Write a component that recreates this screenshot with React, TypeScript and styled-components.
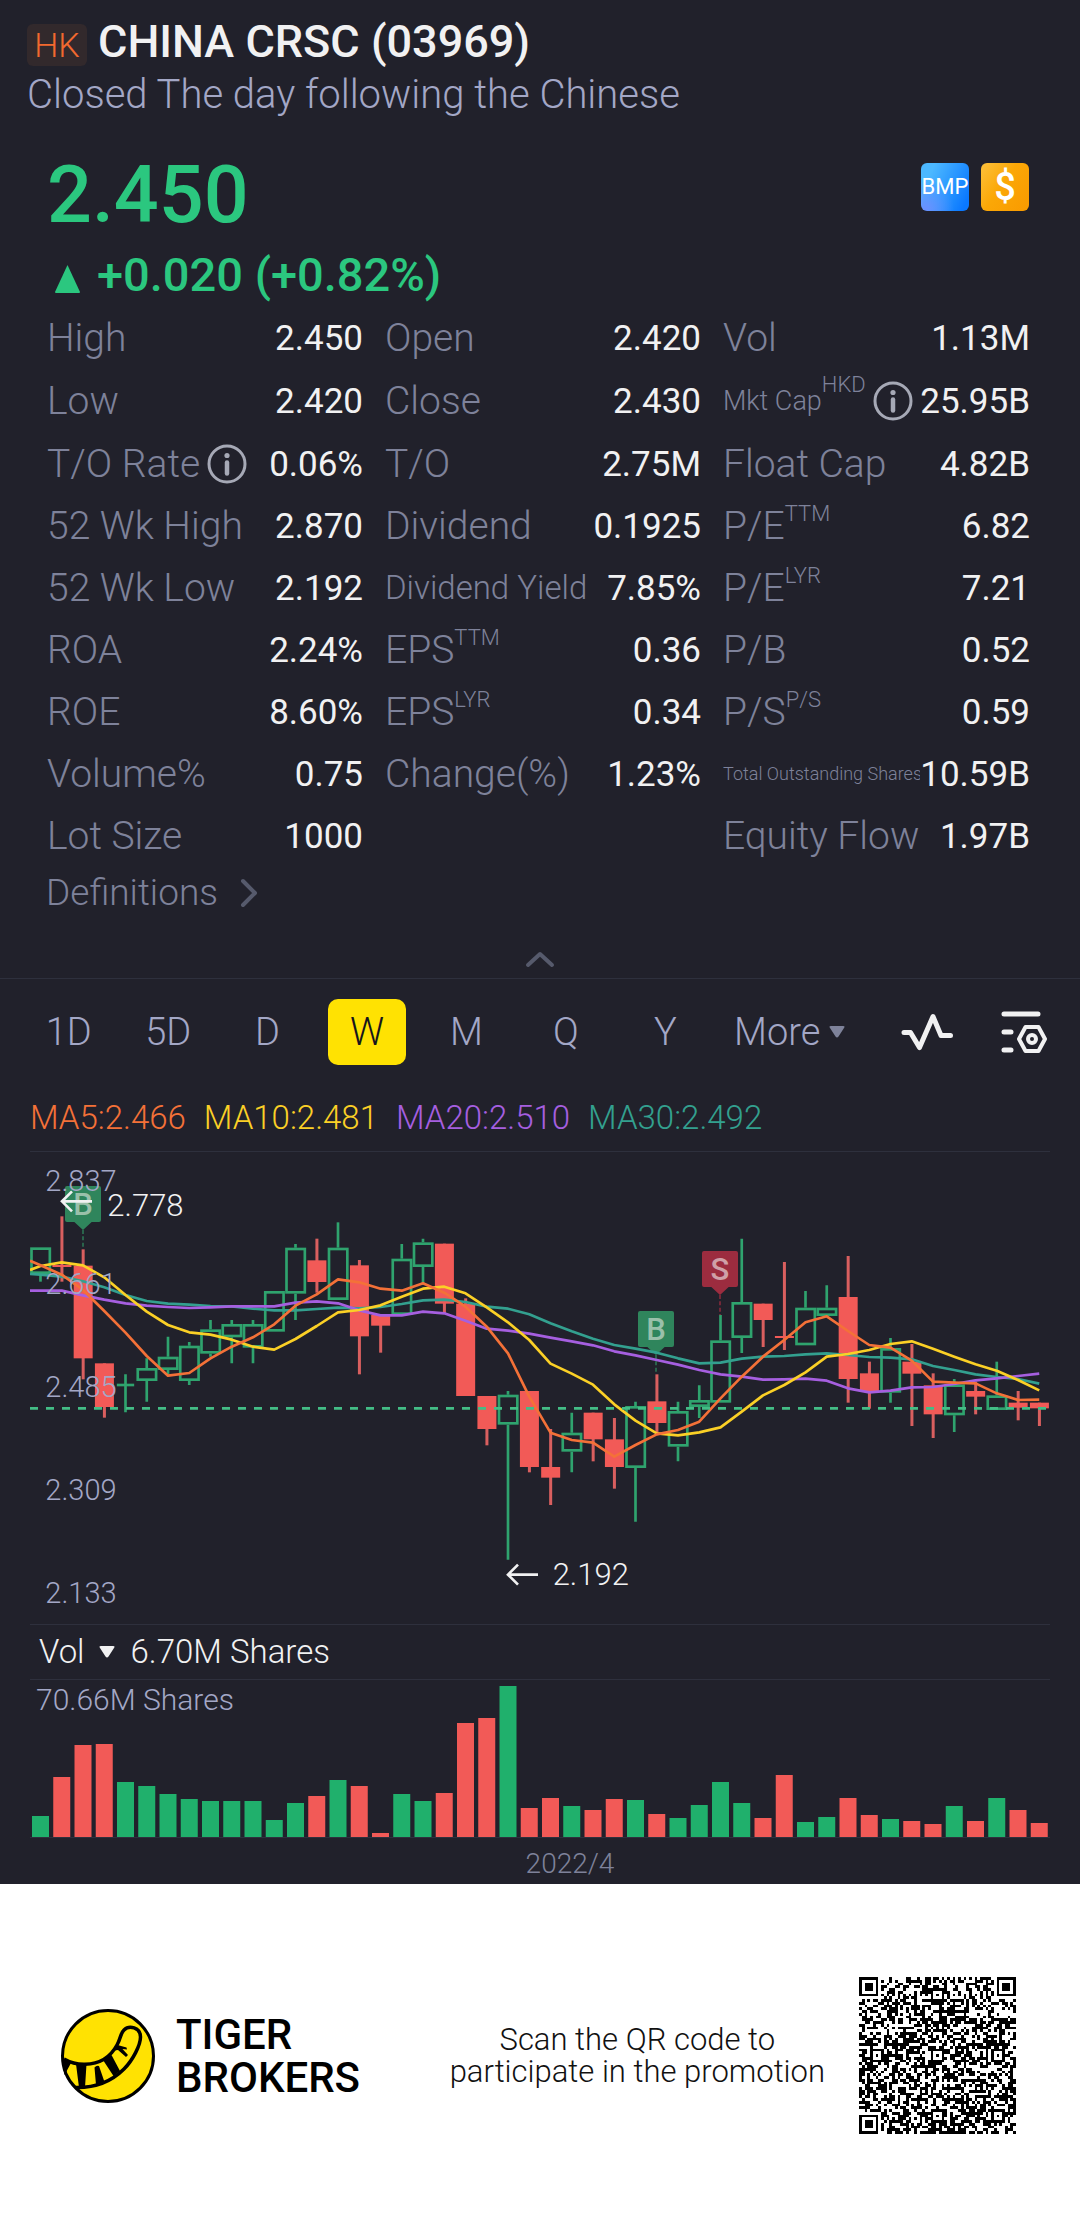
import React, { useState } from "react";
import styled, { createGlobalStyle } from "styled-components";

const color = {
  bg: "#21212b",
  line: "#2e303d",
  text: "#f1f1f2",
  muted: "#7e829a",
  soft: "#a3a7c6",
  up: "#2bc77f",
  candleUp: "#2fa36e",
  candleDown: "#f25a57",
  volumeUp: "#20b06c",
  yellow: "#ffe202",
};

const GlobalStyle = createGlobalStyle`
  *, *::before, *::after { box-sizing: border-box; }
  body {
    margin: 0;
    background: #fff;
    font-family: Roboto, "Liberation Sans", sans-serif;
    font-weight: 300;
  }
  button {
    margin: 0;
    padding: 0;
    border: 0;
    background: none;
    color: inherit;
    font: inherit;
    cursor: pointer;
  }
`;

const Screen = styled.main`
  background: ${color.bg};
  color: ${color.text};
`;

/* ---------- header ---------- */

const Header = styled.header`
  padding: 24px 27px 0;
`;

const TitleRow = styled.div`
  display: flex;
  align-items: flex-start;
  gap: 11px;
`;

const Market = styled.span`
  width: 60px;
  border-radius: 6px;
  background: #32292c;
  color: #f2692f;
  font-size: 34px;
  line-height: 42px;
  text-align: center;
`;

const Title = styled.h1`
  margin: 0;
  font-size: 45px;
  font-weight: 500;
  line-height: 36px;
`;

const Status = styled.p`
  margin: 7px 0 0;
  color: ${color.soft};
  font-size: 40px;
  line-height: 44px;
`;

/* ---------- quote ---------- */

const Quote = styled.section`
  display: flex;
  justify-content: space-between;
  align-items: flex-start;
  padding: 38px 51px 0 47px;
  color: ${color.up};
`;

const Price = styled.div`
  font-size: 79px;
  font-weight: 500;
  line-height: 80px;
`;

const Change = styled.div`
  display: flex;
  align-items: center;
  gap: 17px;
  margin-top: 12px;
  padding-left: 8px;
  font-size: 47px;
  font-weight: 500;
  line-height: 56px;
`;

const UpTriangle = styled.svg`
  width: 25px;
  height: 28px;
  margin-top: 8px;
`;

const Badges = styled.div`
  display: flex;
  gap: 12px;
  padding-top: 8px;
`;

const Badge = styled.button<{ $kind: "bmp" | "cash" }>`
  width: 48px;
  height: 48px;
  border-radius: 6px;
  color: #fff;
  text-align: center;
  line-height: 48px;
  font-size: ${(p) => (p.$kind === "bmp" ? 22 : 38)}px;
  font-weight: ${(p) => (p.$kind === "bmp" ? 400 : 500)};
  background: ${(p) =>
    p.$kind === "bmp"
      ? "radial-gradient(circle at 10% 95%, #6a90ff, transparent 45%), linear-gradient(115deg, #4cb8ff 20%, #0a78ff 90%)"
      : "linear-gradient(125deg, #fdc13c, #fba706 45%, #f99a00)"};
`;

/* ---------- statistics ---------- */

const Stats = styled.dl`
  display: grid;
  grid-template-columns: 316fr 316fr 307fr;
  grid-template-rows: 62px 64px repeat(7, 62px);
  column-gap: 22px;
  margin: 4px 0 0;
  padding: 0 50px 0 47px;
`;

const Stat = styled.div`
  display: flex;
  align-items: center;
  min-width: 0;
`;

const StatLabel = styled.dt<{ $size: number }>`
  display: flex;
  align-items: center;
  flex: 1 1 0;
  min-width: 0;
  overflow: hidden;
  color: ${color.muted};
  font-size: ${(p) => p.$size}px;
  line-height: 62px;
  white-space: nowrap;
`;

const StatValue = styled.dd`
  margin: 0;
  font-size: 35px;
  font-weight: 400;
`;

const Super = styled.sup`
  font-size: 22px;
  line-height: 0;
  vertical-align: 18px;
`;

const InfoButton = styled.button`
  display: flex;
  margin-left: 7px;
  color: #a6a9b6;
`;

const Definitions = styled.button`
  display: flex;
  align-items: center;
  gap: 22px;
  padding-left: 46px;
  color: ${color.muted};
  font-size: 37px;
  line-height: 52px;

  svg {
    color: #565a6c;
  }
`;

const Collapse = styled.button`
  display: flex;
  justify-content: center;
  width: 100%;
  padding: 31px 0 10px;
  border-bottom: 1px solid ${color.line};
  color: #565a6c;
`;

/* ---------- chart ---------- */

const Toolbar = styled.div`
  display: flex;
  align-items: center;
  padding: 20px 33px 0 19px;
  color: ${color.soft};
  font-size: 38px;
`;

const Tabs = styled.div`
  display: grid;
  grid-template-columns: repeat(7, 1fr);
  justify-items: center;
  flex: 0 1 696px;
`;

const Tab = styled.button<{ $active: boolean }>`
  width: 78px;
  height: 66px;
  border-radius: 10px;
  background: ${(p) => (p.$active ? color.yellow : "transparent")};
  color: ${(p) => (p.$active ? "#15151c" : "inherit")};
`;

const More = styled.button`
  display: flex;
  align-items: center;
  gap: 9px;
  margin-left: 19px;
  line-height: 66px;

  svg {
    color: ${color.muted};
  }
`;

const Tools = styled.div`
  display: flex;
  align-items: center;
  gap: 48px;
  margin-left: auto;
  color: ${color.text};
`;

const ToolButton = styled.button`
  display: flex;
`;

const Legend = styled.ul`
  display: flex;
  gap: 18px;
  margin: 33px 0 13px;
  padding: 0 30px;
  list-style: none;
  font-size: 33px;
  line-height: 40px;
`;

const LegendItem = styled.li<{ $color: string }>`
  color: ${(p) => p.$color};
`;

const ChartArea = styled.section`
  padding: 0 30px;
`;

const Drawing = styled.svg`
  display: block;
  width: 100%;
  height: auto;
  font-family: inherit;
`;

const VolumeBar = styled.div`
  display: flex;
  align-items: center;
  gap: 16px;
  padding-left: 9px;
  border-top: 1px solid ${color.line};
  font-size: 33px;
  line-height: 54px;
`;

const VolumeSelect = styled.button`
  display: flex;
  align-items: center;
  gap: 14px;
`;

/* ---------- promotion ---------- */

const Promo = styled.footer`
  display: flex;
  align-items: center;
  padding: 93px 64px 94px 60px;
  background: #fff;
  color: #111;
`;

const Brand = styled.div`
  display: flex;
  align-items: center;
  gap: 20px;
  margin-right: auto;
  color: #000;
  font-size: 42px;
  font-weight: 500;
  line-height: 43px;
`;

const PromoText = styled.p`
  margin: 0 34px 0 0;
  font-size: 31px;
  line-height: 32px;
  text-align: center;
`;

const QrImage = styled.svg`
  display: block;
  width: 157px;
  height: 157px;
`;

/* ---------- data ---------- */

type StatItem = {
  label: string;
  value: string;
  sup?: string;
  info?: boolean;
  size?: number;
};

const stats: (StatItem | null)[] = [
  { label: "High", value: "2.450" },
  { label: "Open", value: "2.420" },
  { label: "Vol", value: "1.13M" },
  { label: "Low", value: "2.420" },
  { label: "Close", value: "2.430" },
  { label: "Mkt Cap", value: "25.95B", sup: "HKD", info: true, size: 27 },
  { label: "T/O Rate", value: "0.06%", info: true },
  { label: "T/O", value: "2.75M" },
  { label: "Float Cap", value: "4.82B" },
  { label: "52 Wk High", value: "2.870" },
  { label: "Dividend", value: "0.1925" },
  { label: "P/E", value: "6.82", sup: "TTM" },
  { label: "52 Wk Low", value: "2.192" },
  { label: "Dividend Yield", value: "7.85%", size: 33 },
  { label: "P/E", value: "7.21", sup: "LYR" },
  { label: "ROA", value: "2.24%" },
  { label: "EPS", value: "0.36", sup: "TTM" },
  { label: "P/B", value: "0.52" },
  { label: "ROE", value: "8.60%" },
  { label: "EPS", value: "0.34", sup: "LYR" },
  { label: "P/S", value: "0.59", sup: "P/S" },
  { label: "Volume%", value: "0.75" },
  { label: "Change(%)", value: "1.23%" },
  { label: "Total Outstanding Shares", value: "10.59B", size: 18 },
  { label: "Lot Size", value: "1000" },
  null,
  { label: "Equity Flow", value: "1.97B" },
];

const periods = ["1D", "5D", "D", "W", "M", "Q", "Y"];

const directions = "grrrggggggggg" + "rgrrggrrrgr" + "rgrrgrggggrrggrrgrrgrgrr";

/* The price plot is drawn three units to the pixel. Each row is [high, top, bottom, low]. */
const shift = <T extends number[]>(by: number, rows: T[]) =>
  rows.map((row) => row.map((v) => v + by));

const candles = [
  ...shift(-33, [
    [322, 322, 402, 425], [229, 375, 381, 425], [328, 377, 655, 718], [670, 670, 801, 833],
    [703, 732, 739, 817], [655, 684, 723, 785], [590, 650, 690, 703], [606, 617, 723, 735],
    [540, 568, 641, 650], [540, 552, 592, 670], [540, 552, 623, 670], [453, 453, 575, 575],
    [312, 323, 461, 540], [296, 361, 426, 458], [247, 323, 480, 480],
  ]),
  ...shift(147, [
    [180, 196, 409, 523], [345, 345, 377, 458], [132, 176, 345, 345], [116, 127, 201, 255],
    [131, 131, 311, 340], [295, 311, 588, 588], [588, 588, 687, 736], [573, 584, 674, 1079],
    [573, 573, 801, 817], [687, 801, 833, 915], [638, 698, 755, 817], [638, 638, 718, 784],
    [654, 718, 801, 866], [605, 618, 804, 965], [523, 604, 669, 700], [605, 633, 740, 784],
    [556, 600, 621, 654],
  ]),
  ...shift(237, [
    [255, 331, 518, 518], [26, 216, 324, 369], [221, 221, 270, 351], [96, 318, 324, 360],
    [183, 233, 346, 346], [166, 233, 258, 262], [78, 201, 447, 518], [395, 430, 483, 536],
    [324, 354, 488, 518], [342, 395, 431, 588], [430, 466, 553, 624], [447, 463, 556, 606],
    [455, 483, 500, 553], [395, 496, 540, 540], [483, 518, 533, 571], [518, 518, 535, 588],
  ]),
];

/* The first value of every average sits on the plot's left edge. */
const average = (a: number[], b: number[], c: number[]) => [
  ...a.map((v) => v - 33),
  ...b.map((v) => v + 147),
  ...c.map((v) => v + 237),
];

const averages = [
  {
    name: "MA30:2.492",
    color: "#33a08f",
    values: average(
      [402, 404, 410, 424, 442, 465, 483, 491, 494, 498, 499, 506, 511, 511, 507, 503],
      [325, 321, 312, 301, 299, 306, 320, 326, 343, 370, 394, 416, 435, 446, 458, 475, 490],
      [398, 386, 380, 378, 373, 370, 375, 381, 383, 388, 408, 420, 433, 441, 447, 461],
    ),
  },
  {
    name: "MA20:2.510",
    color: "#a65fe0",
    values: average(
      [452, 452, 452, 466, 479, 490, 497, 501, 504, 502, 499, 499, 499, 488, 484, 490],
      [331, 346, 346, 335, 340, 362, 386, 392, 401, 413, 424, 436, 454, 466, 480, 494, 510],
      [433, 440, 449, 448, 446, 452, 475, 487, 482, 472, 471, 462, 451, 445, 438, 431],
    ),
  },
  {
    name: "MA10:2.481",
    color: "#fbd026",
    values: average(
      [390, 378, 367, 376, 412, 465, 515, 555, 577, 584, 599, 620, 629, 597, 558, 517],
      [330, 316, 290, 266, 260, 280, 322, 367, 420, 491, 521, 554, 613, 662, 700, 706, 697],
      [592, 545, 496, 465, 427, 380, 372, 360, 342, 334, 356, 380, 403, 422, 450, 481],
    ),
  },
  {
    name: "MA5:2.466",
    color: "#f47138",
    values: average(
      [362, 376, 404, 450, 513, 578, 648, 707, 699, 655, 620, 592, 553, 497, 463, 418],
      [247, 266, 272, 250, 278, 320, 380, 460, 590, 698, 720, 728, 770, 735, 703, 690, 665],
      [505, 440, 380, 330, 277, 259, 303, 345, 353, 392, 455, 458, 460, 490, 510, 509],
    ),
  },
];

const volumes = [
  21, 60, 92, 93, 55, 51, 43, 38, 36, 36, 36, 17, 34, 41, 57, 51, 4, 43, 36, 44, 114, 119, 151, 29,
  39, 31, 27, 38, 37, 23, 19, 32, 55, 34, 19, 62, 15, 20, 39, 22, 18, 16, 13, 31, 16, 39, 27, 14,
];

const priceLabels = ["2.837", "2.661", "2.485", "2.309", "2.133"];

const markers = [
  { letter: "B", x: 159, y: 105, end: 291 },
  { letter: "B", x: 1878, y: 480, end: 669 },
  { letter: "S", x: 2070, y: 300, end: 492 },
];

/* ---------- icons ---------- */

const InfoIcon = () => (
  <svg width="40" height="40" viewBox="0 0 40 40" fill="none" stroke="currentColor">
    <circle cx="20" cy="20" r="18" strokeWidth="3" />
    <circle cx="20" cy="11.5" r="2.6" fill="currentColor" stroke="none" />
    <path d="M20 18.500v11" strokeWidth="4.500" strokeLinecap="round" />
  </svg>
);

const Chevron = ({ up = false }: { up?: boolean }) => (
  <svg
    width={up ? 30 : 18}
    height={up ? 18 : 30}
    viewBox={up ? "0 0 30 18" : "0 0 18 30"}
    fill="none"
    stroke="currentColor"
    strokeWidth="4"
    strokeLinecap="round"
    strokeLinejoin="round"
  >
    <path d={up ? "M3 15 15 4 27 15" : "M3 3 15 15 3 27"} />
  </svg>
);

const Caret = () => (
  <svg width="16" height="12" viewBox="0 0 16 12" fill="currentColor">
    <path d="M2 0h12q2.500 0 1 2L9.500 10.500q-1.500 2-3 0L1 2Q-.5 0 2 0z" />
  </svg>
);

const PulseIcon = () => (
  <svg
    width="52"
    height="42"
    viewBox="0 0 52 42"
    fill="none"
    stroke="currentColor"
    strokeWidth="5"
    strokeLinecap="round"
    strokeLinejoin="round"
  >
    <path d="M3 21.500h6.500L18.500 36.500 32 5.500 40 24.500h9.500" />
  </svg>
);

const ChartSettingsIcon = () => (
  <svg
    width="46"
    height="44"
    viewBox="0 0 46 44"
    fill="none"
    stroke="currentColor"
    strokeWidth="5"
    strokeLinecap="round"
  >
    <path d="M3 4h34M3 22h7M3 40h7" />
    <path d="M18 29 24.500 17h13L44 29 37.500 41h-13z" strokeWidth="4" strokeLinejoin="round" />
    <circle cx="31" cy="29" r="4" strokeWidth="4" />
  </svg>
);

const TigerLogo = () => (
  <svg width="96" height="96" viewBox="0 0 96 96">
    <circle cx="48" cy="48" r="45.500" fill={color.yellow} stroke="#000" strokeWidth="3" />
    <path
      d="M4 51C11 55 18 56.500 25 56.300 38 56 50 50 57 37 61 30 60 26 64 22 69 17 80.500 19 80.500 29 80.500 37 73 52 64 61 52 73 35 80 15 79.500"
      fill="none"
      stroke="#000"
      strokeWidth="3.500"
    />
    <path d="M3 50 11 55 4.500 67Q2.500 58 3 50zM16 56h10.500L25 79.500h-6zM34.500 59.500q2-2.500 4.500-1.500L44.500 74 36 77zM43 52l8.500-5L60 63l-6.500 5zM54 42.500l3.500-5.500 9 2.500.5 2-4.500-.5 5.500 6-2 2-8-7z" />
  </svg>
);

/* ---------- charts ---------- */

const PricePlot = () => {
  const cx = (i: number) => 31.5 + i * 63.75;
  return (
    <Drawing viewBox="0 0 3060 1419" role="img" aria-label="Weekly price chart">
      <path d="M0 1.500H3060" stroke={color.line} strokeWidth="3" />
      {markers.map((m) => {
        const buy = m.letter === "B";
        return (
          <g key={m.x}>
            <path
              d={`M${m.x} ${m.y + 132}V${m.end}`}
              stroke={buy ? "#2f855c" : "#9c2c3f"}
              strokeWidth="4"
              strokeDasharray="12 7"
            />
            <path
              d={`M${m.x - 48} ${m.y}h96q6 0 6 6v96q0 6-6 6h-22l-26 24-26-24h-22q-6 0-6-6v-96q0-6 6-6z`}
              fill={buy ? "#2f855c" : "#9c2c3f"}
            />
            <text
              x={m.x}
              y={m.y + 87}
              fontSize="93"
              fontWeight="500"
              textAnchor="middle"
              fill={buy ? "#9ac0aa" : "#cfa0a8"}
            >
              {m.letter}
            </text>
          </g>
        );
      })}
      {candles.map(([high, top, bottom, low], i) => {
        const x = cx(i);
        if (directions[i] === "g") {
          const flat = bottom - top < 8;
          return (
            <g key={i} stroke={color.candleUp} strokeWidth="8" fill="none">
              <path d={`M${x} ${high}V${flat ? low : top}M${x} ${bottom}V${low}`} />
              {flat ? (
                <path d={`M${x - 26} ${top + 3}h52`} />
              ) : (
                <rect x={x - 27} y={top + 4} width="55" height={bottom - top - 8} />
              )}
            </g>
          );
        }
        return (
          <g key={i} fill={color.candleDown}>
            <rect x={x - 4} y={high} width="9" height={low - high} fill="#d95f5f" />
            <rect x={x - 28} y={top} width="57" height={bottom - top} />
          </g>
        );
      })}
      {averages.map((ma) => (
        <polyline
          key={ma.name}
          points={ma.values.map((y, i) => `${i === 0 ? 0 : cx(i - 1)},${y}`).join(" ")}
          fill="none"
          stroke={ma.color}
          strokeWidth="8"
          strokeLinejoin="round"
        />
      ))}
      <path d="M0 772H3048" stroke="#43bd86" strokeWidth="8" strokeDasharray="24 24" />
      {priceLabels.map((label, i) => (
        <text key={label} x="46" y={120 + i * 309} fontSize="87" fill={color.soft}>
          {label}
        </text>
      ))}
      <g fill="none" stroke={color.text} strokeWidth="8">
        <path d="M186 151H95M126 121 96 151l30 30" />
        <path d="M1524 1271H1433M1464 1241l-30 30 30 30" />
      </g>
      <g fontSize="93" fill={color.text}>
        <text x="232" y="195">2.778</text>
        <text x="1568" y="1302">2.192</text>
      </g>
    </Drawing>
  );
};

const VolumePlot = () => (
  <Drawing viewBox="0 0 1020 205" role="img" aria-label="Weekly volume chart">
    <path d="M0 .5H1020M0 158.500H1020" stroke={color.line} />
    {volumes.map((h, i) => (
      <rect
        key={i}
        x={2 + i * 21.25}
        y={158 - h}
        width="17"
        height={h}
        fill={directions[i] === "g" ? color.volumeUp : color.candleDown}
      />
    ))}
    <text x="6" y="31" fontSize="30" fill={color.soft}>
      70.66M Shares
    </text>
    <text x="540" y="194" fontSize="28" textAnchor="middle" fill={color.muted}>
      2022/4
    </text>
  </Drawing>
);

const QR_SIZE = 57;

const buildQr = () => {
  let seed = 3969;
  const next = () => {
    seed = (seed * 1103515245 + 12345) % 2147483648;
    return seed / 2147483648;
  };
  const ring = (x: number, y: number, cx: number, cy: number) =>
    Math.max(Math.abs(x - cx), Math.abs(y - cy));
  const finders = [[3, 3], [QR_SIZE - 4, 3], [3, QR_SIZE - 4]];
  const aligners = [[28, 6], [6, 28], [28, 28], [50, 28], [28, 50], [50, 50]];
  let d = "";
  for (let y = 0; y < QR_SIZE; y++) {
    for (let x = 0; x < QR_SIZE; x++) {
      let dark = next() < 0.52;
      if (x === 6) dark = y % 2 === 0;
      if (y === 6) dark = x % 2 === 0;
      for (const [cx, cy] of aligners) {
        const r = ring(x, y, cx, cy);
        if (r <= 2) dark = r !== 1;
      }
      for (const [cx, cy] of finders) {
        const r = ring(x, y, cx, cy);
        if (r <= 4) dark = r === 3 || r <= 1;
      }
      if (dark) d += `M${x} ${y}h1v1h-1z`;
    }
  }
  return d;
};

const qrPath = buildQr();

/* ---------- page ---------- */

export default function App() {
  const [period, setPeriod] = useState("W");
  return (
    <>
      <GlobalStyle />
      <Screen>
        <Header>
          <TitleRow>
            <Market>HK</Market>
            <Title>CHINA CRSC (03969)</Title>
          </TitleRow>
          <Status>Closed The day following the Chinese</Status>
        </Header>

        <Quote>
          <div>
            <Price>2.450</Price>
            <Change>
              <UpTriangle viewBox="0 0 25 28" fill="currentColor">
                <path d="M12.500 0 25 27q0 1-1 1H1q-1 0-1-1z" />
              </UpTriangle>
              +0.020 (+0.82%)
            </Change>
          </div>
          <Badges>
            <Badge $kind="bmp">BMP</Badge>
            <Badge $kind="cash">$</Badge>
          </Badges>
        </Quote>

        <Stats>
          {stats.map((item, i) =>
            item ? (
              <Stat key={i}>
                <StatLabel $size={item.size ?? 39}>
                  <span>
                    {item.label}
                    {item.sup && <Super>{item.sup}</Super>}
                  </span>
                  {item.info && (
                    <InfoButton aria-label={`About ${item.label}`}>
                      <InfoIcon />
                    </InfoButton>
                  )}
                </StatLabel>
                <StatValue>{item.value}</StatValue>
              </Stat>
            ) : (
              <Stat key={i} />
            ),
          )}
        </Stats>

        <Definitions>
          Definitions
          <Chevron />
        </Definitions>
        <Collapse aria-label="Collapse details">
          <Chevron up />
        </Collapse>

        <Toolbar>
          <Tabs>
            {periods.map((p) => (
              <Tab key={p} $active={p === period} aria-pressed={p === period} onClick={() => setPeriod(p)}>
                {p}
              </Tab>
            ))}
          </Tabs>
          <More aria-haspopup="menu">
            More
            <Caret />
          </More>
          <Tools>
            <ToolButton aria-label="Indicators">
              <PulseIcon />
            </ToolButton>
            <ToolButton aria-label="Chart settings">
              <ChartSettingsIcon />
            </ToolButton>
          </Tools>
        </Toolbar>

        <Legend>
          {[...averages].reverse().map((ma) => (
            <LegendItem key={ma.name} $color={ma.color}>
              {ma.name}
            </LegendItem>
          ))}
        </Legend>

        <ChartArea>
          <PricePlot />
          <VolumeBar>
            <VolumeSelect aria-haspopup="menu">
              Vol
              <Caret />
            </VolumeSelect>
            <span>6.70M Shares</span>
          </VolumeBar>
          <VolumePlot />
        </ChartArea>
      </Screen>

      <Promo>
        <Brand>
          <TigerLogo />
          <span>
            TIGER
            <br />
            BROKERS
          </span>
        </Brand>
        <PromoText>
          Scan the QR code to
          <br />
          participate in the promotion
        </PromoText>
        <QrImage viewBox={`0 0 ${QR_SIZE} ${QR_SIZE}`} role="img" aria-label="QR code">
          <path d={qrPath} shapeRendering="crispEdges" />
        </QrImage>
      </Promo>
    </>
  );
}
